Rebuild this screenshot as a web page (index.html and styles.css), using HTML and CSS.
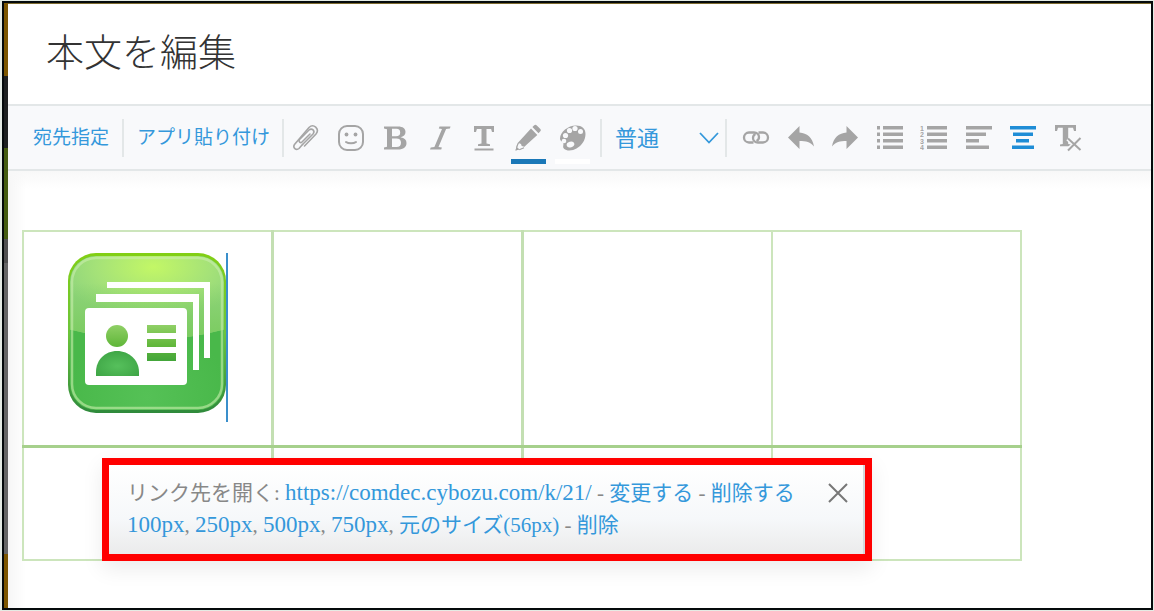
FILE: index.html
```html
<!DOCTYPE html>
<html lang="ja">
<head>
    <meta charset="UTF-8">
    <meta name="viewport" content="width=device-width, initial-scale=1.0">
    <title>本文を編集</title>
    <link rel="stylesheet" href="styles.css">
</head>
<body>
    <div class="window">
        <div class="backdrop"></div>
        <main class="dialog">
            <header class="dialog-header">
                <h1>本文を編集</h1>
            </header>

            <div class="toolbar">
                <button type="button" class="text-button mention">宛先指定</button>
                <button type="button" class="text-button apps">アプリ貼り付け</button>

                <div class="tools tools-format">
                    <button type="button" class="tool" aria-label="添付ファイル">
                        <svg width="28" height="28" viewBox="0 0 28 28" fill="none" stroke="#a5a5a5" stroke-width="1.6" stroke-linecap="round"><path d="M18 10l-8 8c-1.500 1.500-4-.5-2.500-2.500l9.500-9.500c3-2.500 6.500 1 4 4L10.500 20.500"/><path d="M10.500 20.500l-3.500 4c-3 2.500-6.500-1-4.500-4L17 3.500c4.500-4.500 11 1.500 7 6.500L12.500 22"/></svg>
                    </button>
                    <button type="button" class="tool" aria-label="絵文字">
                        <svg width="28" height="28" viewBox="0 0 28 28" fill="none" stroke="#a5a5a5" stroke-width="2" stroke-linecap="round"><rect x="2" y="2" width="24" height="24" rx="8"/><path d="M9 18c2.500 1.800 7.500 1.800 10 0"/><circle cx="9.500" cy="10.500" r="1.900" fill="#a5a5a5" stroke="none"/><circle cx="18.500" cy="10.500" r="1.900" fill="#a5a5a5" stroke="none"/></svg>
                    </button>
                    <button type="button" class="tool" aria-label="太字">
                        <svg width="28" height="28" viewBox="0 0 28 28" fill="#a5a5a5" fill-rule="evenodd"><path d="M3 2.500h14c5 0 7.500 2.200 7.500 5.500 0 2.800-2 4.600-5 5.200 4 .5 6 2.600 6 5.800 0 4-3 6.500-8.500 6.500H3v-2l3-.7V5.200l-3-.7zM11 4.800v7.500h4c3 0 4.200-1.300 4.200-3.800S18 4.800 15.500 4.800zM11 14.500v8.600h4.500c3 0 4.500-1.500 4.500-4.300s-1.500-4.300-4.700-4.300z"/></svg>
                    </button>
                    <button type="button" class="tool" aria-label="斜体">
                        <svg width="28" height="28" viewBox="0 0 28 28" fill="#a5a5a5"><path d="M13.500 2.500h11l-.6 2-3.800.6-7.600 17.800 3.400.6-.7 2H4l.7-2 3.700-.6L16 5.100l-3.200-.6z"/></svg>
                    </button>
                    <button type="button" class="tool" aria-label="下線">
                        <svg width="28" height="28" viewBox="0 0 28 28" fill="#a5a5a5"><path d="M4 2h20v6h-2l-.9-3h-4.600v14.500l3.500.7v1.800H8v-1.800l3.500-.7V5H6.900L6 8H4zM4.500 24.500h19v2h-19z"/></svg>
                    </button>
                    <button type="button" class="tool color-blue" aria-label="文字の色">
                        <svg width="28" height="28" viewBox="0 0 28 28" fill="#a5a5a5"><path d="M20 1.500c1-1 1.800-1 2.800 0l3.300 3.300c1 1 1 1.800 0 2.800l-1.600 1.600-6.100-6.100zM17 4.600l6.300 6.300L9.500 23.500c-2.500 1.200-5 2.200-8 3 .6-2.800 1.500-5.500 2.700-8z"/><path d="M4.500 19l2.500 1 .7 2 2 .5.5 1-5.500 2.300-1.800-1.800z" fill="#f8f9fb"/><path d="M2.500 22.500l3 3-4 1zM4 18.500l1 .4-1.800 4-1-.4zM9.800 23.200l.4 1-4.700 2-.4-1z"/></svg>
                    </button>
                    <button type="button" class="tool color-white" aria-label="背景色">
                        <svg width="28" height="28" viewBox="0 0 28 28"><path d="M17 1.500c6 0 9.500 3 9.500 8.500 0 6.500-3.800 11.500-9 14.500-3.500 2-9.500 3-12.500.2-1.700-1.700-.3-3.600-.6-5.300C4 17.500 1 17.500 1 14.500 1 8 9 1.500 17 1.500z" fill="#a5a5a5"/><g fill="#f8f9fb"><circle cx="5" cy="17" r="2.300"/><circle cx="6.500" cy="11.500" r="2.600"/><circle cx="10.500" cy="6.500" r="2.600"/><circle cx="16" cy="4.500" r="2.600"/><circle cx="21.500" cy="7.500" r="2.500"/><ellipse cx="11.500" cy="20.500" rx="3.900" ry="2.800" transform="rotate(-18 11.500 20.500)"/></g></svg>
                    </button>
                </div>

                <div class="size-picker">
                    <select aria-label="文字サイズ">
                        <option>普通</option>
                    </select>
                    <svg class="chevron" width="22" height="14" viewBox="0 0 22 14" fill="none" stroke="#3498db" stroke-width="1.800"><path d="M2 2l9 9.500L20 2"/></svg>
                </div>

                <div class="tools tools-block">
                    <button type="button" class="tool" aria-label="リンク">
                        <svg width="28" height="28" viewBox="0 0 28 28" fill="none" stroke="#a5a5a5" stroke-width="2.300"><path d="M11.500 18.500H7a5 5 0 0 1 0-10h5c3 0 5 2 5 4.500 0 2-1 3.300-2.500 4"/><path d="M16.500 8.500H21a5 5 0 0 1 0 10h-5c-3 0-5-2-5-4.500 0-2 1-3.300 2.500-4"/></svg>
                    </button>
                    <button type="button" class="tool" aria-label="元に戻す">
                        <svg width="28" height="28" viewBox="0 0 28 28" fill="#a5a5a5"><path d="M1 13.500L12.500 2v6.500C20 9 25.500 13.500 27 22.500c-3.500-4.500-8-5.500-14.500-5.500v8z"/></svg>
                    </button>
                    <button type="button" class="tool" aria-label="やり直す">
                        <svg width="28" height="28" viewBox="0 0 28 28" fill="#a5a5a5"><path d="M27 13.500L15.500 2v6.500C8 9 2.500 13.500 1 22.500c3.500-4.500 8-5.500 14.500-5.500v8z"/></svg>
                    </button>
                    <button type="button" class="tool" aria-label="箇条書き">
                        <svg width="28" height="28" viewBox="0 0 28 28" fill="#a5a5a5"><path d="M1 2h3v3.500H1zM7 2h20v3.500H7zM1 8.500h3V12H1zM7 8.500h20V12H7zM1 15h3v3.500H1zM7 15h20v3.500H7zM1 21.500h3V25H1zM7 21.500h20V25H7z"/></svg>
                    </button>
                    <button type="button" class="tool" aria-label="番号付きリスト">
                        <svg width="28" height="28" viewBox="0 0 28 28" fill="#a5a5a5"><path d="M7 2h20v3.500H7zM7 8.500h20V12H7zM7 15h20v3.500H7zM7 21.500h20V25H7z"/><g class="list-number"><text x="0" y="7">1</text><text x="0" y="13">2</text><text x="0" y="20">3</text><text x="0" y="26">4</text></g></svg>
                    </button>
                    <button type="button" class="tool" aria-label="左揃え">
                        <svg width="28" height="28" viewBox="0 0 28 28" fill="#a5a5a5"><path d="M1 2h26v3.500H1zM1 8.500h20V12H1zM1 15h13v3.500H1zM1 21.500h23V25H1z"/></svg>
                    </button>
                    <button type="button" class="tool" aria-label="中央揃え">
                        <svg width="28" height="28" viewBox="0 0 28 28" fill="#1f8dd6"><path d="M1 2h26v3.500H1zM4 8.500h20V12H4zM7 15h13v3.500H7zM3 21.500h22V25H3z"/></svg>
                    </button>
                    <button type="button" class="tool" aria-label="書式をクリア">
                        <svg width="28" height="28" viewBox="0 0 28 28" fill="#a5a5a5"><path d="M1 1h21v6h-2l-1-3.200h-4.800V20l2.800.6v1.600H6v-1.600l2.800-.6V3.800H4L3 7H1z"/><path d="M14 14.500L26.500 26M26.500 14L14 26.500" stroke="#f8f9fb" stroke-width="5"/><path d="M14 14.500L26.500 26M26.500 14L14 26.500" stroke="#a5a5a5" stroke-width="2"/></svg>
                    </button>
                </div>
            </div>

            <div class="editor">
                <table class="grid">
                    <tr>
                        <td>
                            <div class="app-link">
                                <svg width="158" height="160" viewBox="0 0 158 160" role="img" aria-label="名刺アプリ">
                                    <defs>
                                        <linearGradient id="rim" x1="0" y1="0" x2="0" y2="1">
                                            <stop offset="0" stop-color="#82cf14"/>
                                            <stop offset=".5" stop-color="#6cc43a"/>
                                            <stop offset="1" stop-color="#2f8a3c"/>
                                        </linearGradient>
                                        <radialGradient id="gloss" cx=".54" cy=".16" r=".6">
                                            <stop offset="0" stop-color="#c3f766"/>
                                            <stop offset=".6" stop-color="#a5e278"/>
                                            <stop offset="1" stop-color="#8ed47c"/>
                                        </radialGradient>
                                        <linearGradient id="fade" x1="0" y1="0" x2="0" y2="1">
                                            <stop offset="0" stop-color="#7ccb5c" stop-opacity="0"/>
                                            <stop offset="1" stop-color="#7acb60"/>
                                        </linearGradient>
                                        <radialGradient id="base" cx=".5" cy=".9" r=".5">
                                            <stop offset="0" stop-color="#55c156"/>
                                            <stop offset="1" stop-color="#49b84a"/>
                                        </radialGradient>
                                        <linearGradient id="mark" gradientUnits="userSpaceOnUse" x1="0" y1="70" x2="0" y2="110">
                                            <stop offset="0" stop-color="#94d26a"/>
                                            <stop offset=".55" stop-color="#63b83c"/>
                                            <stop offset="1" stop-color="#3fa33a"/>
                                        </linearGradient>
                                        <radialGradient id="torso" cx=".5" cy=".6" r=".6">
                                            <stop offset="0" stop-color="#56c05c"/>
                                            <stop offset="1" stop-color="#3fa646"/>
                                        </radialGradient>
                                        <clipPath id="face"><rect x="2" y="3" width="154" height="154" rx="26"/></clipPath>
                                    </defs>
                                    <rect width="158" height="160" rx="28" fill="url(#rim)"/>
                                    <g clip-path="url(#face)">
                                        <rect width="158" height="160" fill="url(#base)"/>
                                        <path d="M0 0h158v76Q80 98 0 76z" fill="url(#gloss)"/>
                                        <path d="M0 30h158v46Q80 98 0 76z" fill="url(#fade)"/>
                                    </g>
                                    <rect x="4" y="5" width="150" height="150" rx="24" fill="none" stroke="#c9efae" stroke-width="2.500" opacity=".6"/>
                                    <path d="M39 29h103v76h-6V35H39z" fill="#fff"/>
                                    <path d="M28 41h103v76h-6V49H28z" fill="#fff"/>
                                    <rect x="17" y="55" width="102" height="77" rx="4" fill="#fff"/>
                                    <circle cx="49" cy="83" r="11" fill="url(#mark)"/>
                                    <path d="M28 123v-4C28 107 37 98 49 98s22 9 22 21v4z" fill="url(#torso)"/>
                                    <path d="M79 72h29v8H79zM79 86h29v8H79zM79 100h29v8H79z" fill="url(#mark)"/>
                                </svg>
                                <span class="caret"></span>
                            </div>
                        </td>
                        <td></td>
                        <td></td>
                        <td></td>
                    </tr>
                    <tr>
                        <td></td>
                        <td></td>
                        <td></td>
                        <td></td>
                    </tr>
                </table>

                <div class="link-bubble">
                    <div class="bubble-inner">
                        <div class="bubble-text">
                            <p>リンク先を開く: <a class="latin" href="#">https://comdec.cybozu.com/k/21/</a> - <a href="#">変更する</a> - <a href="#">削除する</a></p>
                            <p><a class="latin" href="#">100px</a>, <a class="latin" href="#">250px</a>, <a class="latin" href="#">500px</a>, <a class="latin" href="#">750px</a>, <a href="#">元のサイズ(56px)</a> - <a href="#">削除</a></p>
                        </div>
                        <button type="button" class="close" aria-label="閉じる">
                            <svg width="20" height="20" viewBox="0 0 20 20" stroke="#777" stroke-width="2"><path d="M1 1l18 18M19 1L1 19"/></svg>
                        </button>
                    </div>
                </div>
            </div>
        </main>
    </div>
</body>
</html>
```

FILE: styles.css
```css
* {
    box-sizing: border-box;
}
body {
    margin: 0;
    padding: 1px 1px 1px 2px;
    background: #e4ebe4;
    font-family: "Liberation Serif", "Noto Sans CJK JP", sans-serif;
    color: #888;
}
button, select {
    margin: 0;
    padding: 0;
    border: none;
    background: none;
    font-family: "Noto Sans CJK JP", sans-serif;
    color: #3498db;
    cursor: pointer;
}
.window {
    display: flex;
    min-height: calc(100vh - 2px);
    border: 2px solid #050a0c;
}

/* Strip of the dimmed page behind the dialog */
.backdrop {
    width: 4px;
    background: linear-gradient(#7d5600 12%, #1e2021 12% 24%, #455c10 24% 39%, #505050 39% 43%, #666 43% 91%, #7d5600 91%);
}
.dialog {
    flex: 1;
    display: flex;
    flex-direction: column;
    min-width: 0;
    border-top: 1px solid #7d6a30;
    background: #fff;
}
.dialog-header {
    height: 100px;
    padding: 18px 38px;
}
h1 {
    margin: 0;
    font-family: "Noto Sans CJK JP", sans-serif;
    font-size: 38px;
    font-weight: 300;
    line-height: 56px;
    color: #333;
}

/* Toolbar */
.toolbar {
    display: flex;
    align-items: center;
    height: 67px;
    padding-left: 25px;
    border-top: 2px solid #e3e7e8;
    border-bottom: 2px solid #e3e7e8;
    background: #f8f9fb;
}
.text-button {
    height: 38px;
    padding-bottom: 4px;
    border-right: 2px solid #e3e7e8;
    font-size: 19px;
    white-space: nowrap;
}
.mention {
    padding-right: 13px;
}
.apps {
    padding-right: 12px;
    padding-left: 13px;
}
.tools {
    display: grid;
    grid-auto-flow: column;
    grid-auto-columns: 1fr;
}
.tools-format {
    width: 311px;
}
.tools-block {
    width: 356px;
    margin-left: 7px;
}
.tool {
    display: flex;
    justify-content: center;
    align-items: center;
    height: 52px;
}
.color-blue {
    background: linear-gradient(#1a78b8, #1a78b8) center bottom / 35px 5px no-repeat;
}
.color-white {
    background: linear-gradient(#fff, #fff) center bottom / 35px 5px no-repeat;
}
.list-number {
    font: bold 7px "Liberation Sans", sans-serif;
}
.size-picker {
    display: flex;
    align-items: center;
    width: 127px;
    height: 38px;
    margin-left: 5px;
    padding: 0 5px 0 13px;
    border-left: 2px solid #e3e7e8;
    border-right: 2px solid #e3e7e8;
}
.size-picker select {
    flex: 1;
    appearance: none;
    padding-bottom: 4px;
    font-size: 22px;
}
.chevron {
    pointer-events: none;
}

/* Editor */
.editor {
    position: relative;
    flex: 1;
    padding: 59px 14px 20px;
    background:
        linear-gradient(#f8f8f8, rgba(255, 255, 255, 0) 18px),
        linear-gradient(90deg, #f6f6f6, #fff 18px);
}
.grid {
    width: 100%;
    max-width: 1000px;
    table-layout: fixed;
    border-collapse: collapse;
    border: 2px solid #cce5bc;
}
.grid td {
    height: 114px;
    padding: 0 0 0 44px;
    border-right: 3px solid #c3dfb2;
    vertical-align: top;
}
.grid td:nth-child(n+3) {
    border-right: 2px solid #cce5bc;
}
.grid tr:first-child td {
    height: 215px;
    padding-top: 21px;
    border-bottom: 3px solid #a6d08c;
}
.app-link {
    display: flex;
}
.caret {
    width: 2px;
    height: 169px;
    background: #3a8fcb;
}

/* Link popup */
.link-bubble {
    position: absolute;
    top: 287px;
    left: 94px;
    width: 770px;
    border: 7px solid #f00;
    box-shadow: 0 8px 20px rgba(0, 0, 0, .08);
}
.bubble-inner {
    display: flex;
    justify-content: space-between;
    align-items: flex-start;
    height: 89px;
    padding: 12px 15px 0 18px;
    border-right: 2px solid #d4d8da;
    background: linear-gradient(#fff, #f6f8fa 60%, #ebebeb);
}
.bubble-text {
    font-size: 21px;
    line-height: 31px;
    white-space: nowrap;
}
.bubble-text p {
    margin: 0;
}
.bubble-text a {
    color: #3498db;
    text-decoration: none;
}
.bubble-text .latin {
    font-size: 23px;
}
.close {
    display: flex;
    padding: 6px 0;
}
```
